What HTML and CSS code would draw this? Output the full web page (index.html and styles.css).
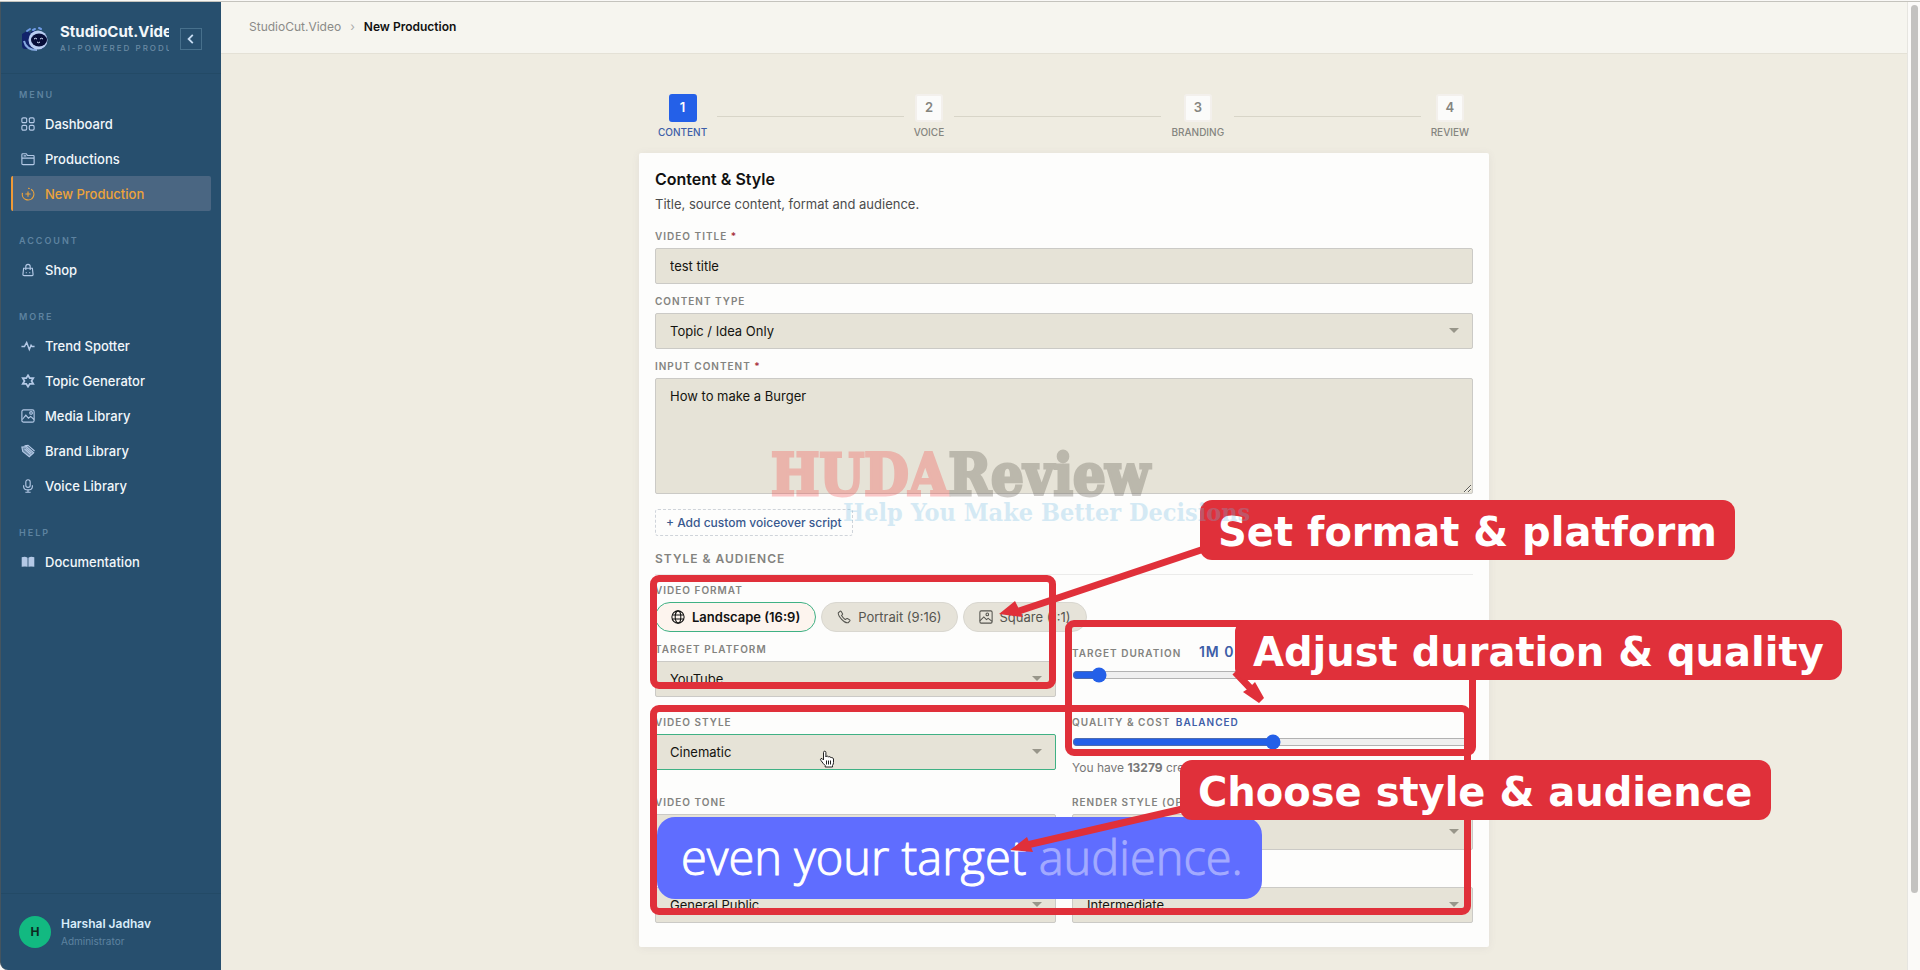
FILE: index.html
```
<!DOCTYPE html>
<html lang="en">
<head>
    <meta charset="UTF-8">
    <meta name="viewport" content="width=device-width, initial-scale=1.0">
    <title>New Production - StudioCut.Video</title>
    <link rel="stylesheet" href="styles.css">
</head>
<body>
    <div class="app">
        <!-- sidebar -->
        <aside class="sidebar">
            <div class="brand">
                <svg class="brand-logo" viewBox="0 0 28 26">
                    <path d="M1 8l5-3 3 2 3-3 10 3v16H4q-3 0-3-4z" fill="#12246b"/>
                    <path d="M6 5l3-2M12 4l2-1M18 2l2 1" stroke="#6f9be6" stroke-width="2" stroke-linecap="round"/>
                    <path d="M3 15q2 9 13 9" stroke="#86a9e0" stroke-width="2" fill="none"/>
                    <circle cx="17" cy="14" r="9.500" fill="#b9cdf2"/>
                    <ellipse cx="18" cy="14" rx="8" ry="6.500" fill="#070d38"/>
                    <path d="M13 13q1.500-1.500 3 0M19 13q1.500-1.500 3 0M16 16q1.500 1.500 3 0" stroke="#dbe8ff" fill="none"/>
                </svg>
                <div class="brand-text">
                    <div class="brand-name">StudioCut.Video</div>
                    <div class="brand-sub">AI-POWERED PRODUCTION</div>
                </div>
                <button class="collapse" type="button" aria-label="Collapse sidebar">
                    <svg viewBox="0 0 10 10"><path d="M6.500 1.500L3 5l3.500 3.500" fill="none" stroke="currentColor" stroke-width="1.500"/></svg>
                </button>
            </div>

            <nav class="nav">
                <div class="nav-group">
                    <div class="nav-label">MENU</div>
                    <a class="nav-item" href="#">
                        <svg viewBox="0 0 16 16"><rect x="1" y="1" width="5.500" height="5.500" rx="1.500"/><rect x="9.500" y="1" width="5.500" height="5.500" rx="1.500"/><rect x="1" y="9.500" width="5.500" height="5.500" rx="1.500"/><rect x="9.500" y="9.500" width="5.500" height="5.500" rx="1.500"/></svg>
                        Dashboard
                    </a>
                    <a class="nav-item" href="#">
                        <svg viewBox="0 0 16 16"><path d="M1 13V3q0-1 1-1h4l1.500 2H14q1 0 1 1v8q0 1.500-1.500 1.500h-11Q1 14.500 1 13M1 7h14M3 4.500h3"/></svg>
                        Productions
                    </a>
                    <a class="nav-item active" href="#">
                        <svg viewBox="0 0 16 16"><path d="M11.500 2.600a6.600 6.600 0 1 1-9.800 4M8 5v6M5 8h6M8 1.400q1 0 2 .3"/></svg>
                        New Production
                    </a>
                </div>
                <div class="nav-group">
                    <div class="nav-label">ACCOUNT</div>
                    <a class="nav-item" href="#">
                        <svg viewBox="0 0 16 16"><path d="M3 6h10l.8 7q0 1.500-1.500 1.500H3.700q-1.500 0-1.500-1.500zM5.500 8V4q0-2.500 2.500-2.500T10.500 4v4M5.500 11h1M9.500 11h1"/></svg>
                        Shop
                    </a>
                </div>
                <div class="nav-group">
                    <div class="nav-label">MORE</div>
                    <a class="nav-item" href="#">
                        <svg viewBox="0 0 16 16"><path d="M.5 8.500h3.500L6.500 4l3 8 2-5 1 1.500h3" stroke-width="1.600"/></svg>
                        Trend Spotter
                    </a>
                    <a class="nav-item" href="#">
                        <svg viewBox="0 0 16 16"><path d="M8 1.500l2 3.200h4L12 8l2 3.300h-4L8 14.500l-2-3.200H2L4 8 2 4.700h4z" stroke-width="2"/></svg>
                        Topic Generator
                    </a>
                    <a class="nav-item" href="#">
                        <svg viewBox="0 0 16 16"><rect x="1" y="1" width="14" height="14" rx="2"/><path d="M1.500 12L5.500 7l3 3.500L11 8.500l4 3.500"/><circle cx="11.500" cy="4.500" r="1.500"/></svg>
                        Media Library
                    </a>
                    <a class="nav-item" href="#">
                        <svg viewBox="0 0 16 16"><path d="M1 3.500L6.500 3l8 7-5 4.500L2 8.500z" fill="#b4c9e6" fill-opacity=".5"/><path d="M4 2l4-.5L15.500 8M4 5.500L11 12M6 5l6 5.500"/></svg>
                        Brand Library
                    </a>
                    <a class="nav-item" href="#">
                        <svg viewBox="0 0 16 16"><rect x="5.500" y=".8" width="5" height="8.700" rx="2.500"/><path d="M3 7v1.500q0 4 5 4t5-4V7M8 12.500V15M5 15.200h6"/></svg>
                        Voice Library
                    </a>
                </div>
                <div class="nav-group">
                    <div class="nav-label">HELP</div>
                    <a class="nav-item" href="#">
                        <svg viewBox="0 0 16 16"><path d="M.8 2.500Q5 1.500 7.500 3v10.500Q5 12.500.8 13.500zM8.500 3Q11 1.500 15.200 2.500v11Q11 12.500 8.500 13.500z" fill="#b4c9e6" stroke="none"/></svg>
                        Documentation
                    </a>
                </div>
            </nav>

            <div class="user">
                <div class="avatar">H</div>
                <div>
                    <div class="user-name">Harshal Jadhav</div>
                    <div class="user-role">Administrator</div>
                </div>
            </div>
        </aside>

        <!-- main area -->
        <main class="main">
            <header class="topbar">
                <a href="#">StudioCut.Video</a>
                <span class="sep">›</span>
                <strong>New Production</strong>
            </header>

            <div class="wizard">
                <div class="steps">
                    <div class="step current"><span class="step-num">1</span><span class="step-name">CONTENT</span></div>
                    <div class="step-line"></div>
                    <div class="step"><span class="step-num">2</span><span class="step-name">VOICE</span></div>
                    <div class="step-line wide"></div>
                    <div class="step"><span class="step-num">3</span><span class="step-name">BRANDING</span></div>
                    <div class="step-line"></div>
                    <div class="step"><span class="step-num">4</span><span class="step-name">REVIEW</span></div>
                </div>

                <form class="card">
                    <h2>Content &amp; Style</h2>
                    <p class="intro">Title, source content, format and audience.</p>

                    <div class="field">
                        <label for="title">VIDEO TITLE <span class="req">*</span></label>
                        <input class="control" type="text" id="title" value="test title">
                    </div>
                    <div class="field">
                        <label for="type">CONTENT TYPE</label>
                        <div class="select">
                            <select class="control" id="type"><option>Topic / Idea Only</option></select>
                        </div>
                    </div>
                    <div class="field">
                        <label for="content">INPUT CONTENT <span class="req">*</span></label>
                        <textarea class="control" id="content">How to make a Burger</textarea>
                    </div>

                    <button class="add-script" type="button">+ Add custom voiceover script</button>

                    <h3>STYLE &amp; AUDIENCE</h3>

                    <div class="field">
                        <div class="label">VIDEO FORMAT</div>
                        <div class="pills">
                            <button class="pill selected" type="button">
                                <svg viewBox="0 0 16 16"><circle cx="8" cy="8" r="7"/><ellipse cx="8" cy="8" rx="3.200" ry="7"/><path d="M1.500 5.800h13M1.500 10.200h13"/></svg>
                                Landscape (16:9)
                            </button>
                            <button class="pill" type="button">
                                <svg viewBox="0 0 16 16"><path d="M3.700 1.300L1.500 3.200Q1 6 5.300 10.700T12.800 14.500l2-2.200q.2-.6-.3-1l-2.600-1.600q-.5-.2-1 .2l-1 1Q8 10.500 5.200 6.200l1-1q.4-.5.100-1L4.700 1.500q-.5-.5-1-.2z"/></svg>
                                Portrait (9:16)
                            </button>
                            <button class="pill" type="button">
                                <svg viewBox="0 0 16 16"><rect x="1" y="1" width="14" height="14" rx="1.500"/><path d="M1 12.500L5.500 8l3 3 2-1.500 4.500 3.500"/><circle cx="9.500" cy="5" r="1.500"/></svg>
                                Square (1:1)
                            </button>
                        </div>
                    </div>

                    <div class="grid">
                        <div>
                            <label for="platform">TARGET PLATFORM</label>
                            <div class="select"><select class="control" id="platform"><option>YouTube</option></select></div>
                        </div>
                        <div class="duration">
                            <label for="duration">TARGET DURATION <output>1M 0S</output></label>
                            <input type="range" id="duration" min="0" max="100" value="5">
                        </div>
                        <div>
                            <label for="style">VIDEO STYLE</label>
                            <div class="select"><select class="control focused" id="style"><option>Cinematic</option></select></div>
                        </div>
                        <div>
                            <label for="quality">QUALITY &amp; COST <output>BALANCED</output></label>
                            <input type="range" id="quality" min="0" max="100" value="50">
                            <p class="hint">You have <b>13279</b> credits</p>
                        </div>
                        <div>
                            <label for="tone">VIDEO TONE</label>
                            <div class="select"><select class="control" id="tone"><option>Professional</option></select></div>
                        </div>
                        <div>
                            <label for="render">RENDER STYLE (OPTIONAL)</label>
                            <div class="select"><select class="control" id="render"><option>Auto (best for production)</option></select></div>
                        </div>
                        <div>
                            <label for="audience">TARGET AUDIENCE</label>
                            <div class="select"><select class="control" id="audience"><option>General Public</option></select></div>
                        </div>
                        <div>
                            <label for="level">LEVEL</label>
                            <div class="select"><select class="control" id="level"><option>Intermediate</option></select></div>
                        </div>
                    </div>
                </form>

                <!-- tutorial overlay, laid over the wizard -->
                <div class="overlay">
                    <svg class="hand" viewBox="0 0 16 18">
                        <path d="M4.500 10V2.500q0-1.300 1.200-1.300t1.200 1.300V7q.2-1 1.400-.9T9.500 7.200q.3-.7 1.300-.5t1.200 1.200q.3-.5 1.200-.3T14.500 9v3.500q0 1.500-1 3V17H6.200v-1.500Q4 13.500 2 10.500q-1-1.500 0-2t2.500 1.500z" fill="#fff" stroke="#222"/>
                        <path d="M7.500 10.500v4M9.500 10.500v4M11.500 10.500v4" stroke="#222"/>
                    </svg>
                    <div class="caption">even your target <span>audience.</span></div>
                    <div class="box box-format"></div>
                    <div class="box box-duration"></div>
                    <div class="box box-style"></div>
                    <svg class="arrows" viewBox="0 0 640 320">
                        <path d="M571 47L380 111M596 172l18 19M552 307L388 345" stroke="#e0303a" stroke-width="7"/>
                        <path d="M360 114l16-13 8 16zM616 182l9 16-5 5-16-11 6-4zM371 350l17-13 6 15z" fill="#e0303a"/>
                    </svg>
                    <div class="tag tag-format">Set format &amp; platform</div>
                    <div class="tag tag-duration">Adjust duration &amp; quality</div>
                    <div class="tag tag-style">Choose style &amp; audience</div>
                    <div class="mark">
                        <div class="mark-name"><span>HUDA</span>Review</div>
                        <div class="mark-line">Help You Make Better Decisions</div>
                    </div>
                </div>
            </div>
        </main>
        <div class="scrollbar"><div class="thumb"></div></div>
    </div>
</body>
</html>
```
FILE: styles.css
```
*{
    box-sizing: border-box;
    margin: 0;
    padding: 0;
}
body{
    font-family: Inter, "Liberation Sans", sans-serif;
    font-size: 13px;
    color: #111;
    background-color: #f9f8f6;
    padding-top: 1px;
}
button, input, select, textarea{
    font-family: inherit;
}
.app{
    display: flex;
    min-height: calc(100vh - 1px);
    border-top: 1px solid #c4c3bd;
    overflow: hidden;
}

/* sidebar */
.sidebar{
    width: 221px;
    flex-shrink: 0;
    display: flex;
    flex-direction: column;
    background-color: #274f6e;
    border-left: 1px solid #44545f;
    border-bottom-left-radius: 8px;
    color: #f2f7fb;
}
.brand{
    display: flex;
    align-items: center;
    height: 72px;
    padding: 2px 18px 0 20px;
    border-bottom: 1px solid #234a66;
}
.brand-logo{
    width: 28px;
    height: 26px;
    flex-shrink: 0;
}
.brand-text{
    width: 109px;
    margin: 0 11px;
    flex-shrink: 0;
    overflow: hidden;
    white-space: nowrap;
}
.brand-name{
    font-size: 15px;
    font-weight: 700;
    line-height: 18px;
}
.brand-sub{
    font-size: 8px;
    font-weight: 500;
    line-height: 14px;
    letter-spacing: 2px;
    color: #6b8ba4;
}
.collapse{
    width: 22px;
    height: 22px;
    flex-shrink: 0;
    background: none;
    border: 1px solid #47708c;
    color: #c7dcf2;
}
.collapse svg{
    width: 12px;
    height: 12px;
    display: block;
    margin: auto;
}
.nav{
    flex: 1;
    padding: 13px 10px;
}
.nav-group + .nav-group{
    margin-top: 22px;
}
.nav-label{
    padding: 0 8px;
    margin-bottom: 3px;
    font-size: 9px;
    font-weight: 600;
    line-height: 16px;
    letter-spacing: 2px;
    color: #5e83a0;
}
.nav-item{
    display: flex;
    align-items: center;
    gap: 10px;
    height: 35px;
    padding-left: 8px;
    border-left: 2px solid transparent;
    border-radius: 2px;
    font-size: 13px;
    font-weight: 500;
    color: inherit;
    text-decoration: none;
}
.nav-item svg{
    width: 14px;
    height: 14px;
    fill: none;
    stroke: #b4c9e6;
    stroke-width: 1.3;
}
.nav-item.active{
    background-color: #4a6682;
    border-left-color: #f09a38;
    color: #eda33a;
}
.nav-item.active svg{
    stroke: #eda33a;
}
.user{
    display: flex;
    align-items: center;
    gap: 10px;
    padding: 21px 18px;
    border-top: 1px solid #234a66;
}
.avatar{
    width: 32px;
    height: 32px;
    border-radius: 50%;
    background-color: #12b981;
    color: #0c2b22;
    font-size: 12px;
    font-weight: 700;
    line-height: 32px;
    text-align: center;
}
.user-name{
    font-size: 12px;
    font-weight: 600;
    line-height: 18px;
    color: #d8ecfa;
}
.user-role{
    font-size: 10px;
    line-height: 16px;
    color: #5e83a0;
}

/* main */
.main{
    flex: 1;
    background-color: #efece1;
}
.topbar{
    display: flex;
    align-items: center;
    gap: 9px;
    height: 52px;
    padding: 0 28px 2px;
    background-color: #f6f5ef;
    border-bottom: 1px solid #e4e1d6;
    font-size: 12px;
}
.topbar a{
    color: #8b8b88;
    text-decoration: none;
}
.topbar .sep{
    color: #aaa;
}
.topbar strong{
    font-weight: 600;
}
.scrollbar{
    width: 13px;
    flex-shrink: 0;
    padding: 3px 2px 0 3px;
    background-color: #fbfaf8;
    border-left: 1px solid #e6e5e0;
}
.scrollbar .thumb{
    height: 92%;
    background-color: #c3c2c0;
    border-radius: 4px;
}
.wizard{
    position: relative;
    max-width: 850px;
    margin: 0 auto;
    padding: 40px 0 23px;
}

/* steps */
.steps{
    display: flex;
    padding: 0 20px 0 19px;
    margin-bottom: 13px;
}
.step{
    display: flex;
    flex-direction: column;
    align-items: center;
    color: #85857f;
}
.step-num{
    width: 28px;
    height: 28px;
    background-color: #fbfbfa;
    border: 2px solid #f3f0ec;
    border-radius: 3px;
    font-size: 13px;
    font-weight: 600;
    line-height: 22px;
    text-align: center;
}
.step-name{
    margin-top: 2px;
    font-size: 10px;
    font-weight: 500;
    line-height: 16px;
}
.step.current .step-num{
    background-color: #2460e8;
    border-color: #2460e8;
    color: #fff;
}
.step.current .step-name{
    color: #3d5ea8;
}
.step-line{
    flex: 9;
    height: 1px;
    margin: 22px 10px 0;
    background-color: #d8d5c8;
}
.step-line.wide{
    flex: 10;
}

/* form card */
.card{
    padding: 16px 16px 24px;
    background-color: #fdfdfc;
    border-radius: 2px;
    box-shadow: 0 1px 8px rgba(90, 80, 110, .08);
}
h2{
    font-size: 16px;
    font-weight: 600;
    line-height: 20px;
}
.intro{
    margin: 5px 0 14px;
    line-height: 20px;
    color: #4c4c4c;
}
.field{
    margin-bottom: 9px;
}
label, .label{
    display: block;
    margin-bottom: 4px;
    font-size: 10px;
    font-weight: 600;
    line-height: 16px;
    letter-spacing: 1px;
    color: #83837f;
}
.req{
    color: #a8323e;
}
.control{
    display: block;
    width: 100%;
    height: 36px;
    padding: 0 14px;
    background-color: #e6e3d7;
    border: 1px solid #cbcac6;
    border-radius: 2px;
    font-size: 13px;
    color: #14140f;
    appearance: none;
    outline: none;
}
.control.focused{
    border-color: #3fb184;
}
textarea.control{
    height: 116px;
    padding: 8px 14px;
    line-height: 18px;
    resize: vertical;
}
.select{
    position: relative;
}
.select::after{
    content: "";
    position: absolute;
    right: 14px;
    top: 15px;
    border: 5px solid transparent;
    border-top-color: #98968a;
    border-bottom: 0;
}
.add-script{
    display: block;
    height: 27px;
    margin: 15px 0;
    padding: 0 10px;
    background-color: transparent;
    border: 1px dashed #cfd4da;
    border-radius: 3px;
    font-size: 12px;
    font-weight: 500;
    color: #38588e;
}
h3{
    margin-bottom: 7px;
    padding-bottom: 7px;
    border-bottom: 1px solid #ebebea;
    font-size: 12px;
    font-weight: 600;
    line-height: 16px;
    letter-spacing: 1px;
    color: #83837f;
}
.pills{
    display: flex;
    gap: 5px;
}
.pill{
    display: flex;
    align-items: center;
    gap: 7px;
    height: 30px;
    padding: 0 15px;
    background-color: #e6e3d9;
    border: 1px solid #d9d7d0;
    border-radius: 15px;
    font-size: 13px;
    color: #55554f;
}
.pill svg{
    width: 14px;
    height: 14px;
    fill: none;
    stroke: currentColor;
    stroke-width: 1.2;
}
.pill.selected{
    background-color: #fdf4ee;
    border-color: #3fb184;
    font-weight: 600;
    color: #111;
}
.grid{
    display: grid;
    grid-template-columns: 1fr 1fr;
    gap: 17px 16px;
}
input[type=range]{
    display: block;
    width: 100%;
    height: 16px;
    accent-color: #2460e8;
}
output{
    margin-left: 2px;
    color: #3d5ea8;
}
.duration label{
    margin-bottom: 3px;
    line-height: 22px;
}
.duration output{
    margin-left: 14px;
    font-size: 14px;
}
.hint{
    margin-top: 9px;
    font-size: 12px;
    line-height: 18px;
    color: #777;
}

/* tutorial overlay */
.overlay{
    position: absolute;
    inset: 0;
    pointer-events: none;
}
.overlay > *{
    position: absolute;
}
.hand{
    left: 180px;
    top: 696px;
    width: 16px;
    height: 18px;
    fill: none;
}
.caption{
    left: 18px;
    top: 763px;
    width: 605px;
    height: 82px;
    padding-left: 24px;
    background-color: #5f6dff;
    border-radius: 18px;
    font-family: "Open Sans", Inter, sans-serif;
    font-size: 47px;
    font-weight: 300;
    line-height: 80px;
    white-space: nowrap;
    color: #fff;
    -webkit-text-stroke: 1px;
}
.caption span{
    color: #a3aaff;
}
.box{
    border: 7px solid #e0303a;
    border-radius: 9px;
}
.box-format{
    left: 11px;
    top: 521px;
    width: 406px;
    height: 114px;
}
.box-duration{
    left: 426px;
    top: 566px;
    width: 411px;
    height: 136px;
}
.box-style{
    left: 11px;
    top: 651px;
    width: 821px;
    height: 210px;
}
.arrows{
    left: 0;
    top: 446px;
    width: 640px;
    height: 320px;
    overflow: visible;
}
.tag{
    height: 60px;
    padding: 0 18px;
    background-color: #e0303a;
    border-radius: 12px;
    font-family: "DejaVu Sans", sans-serif;
    font-size: 40px;
    font-weight: 700;
    line-height: 64px;
    white-space: nowrap;
    color: #fff;
}
.tag-format{
    left: 561px;
    top: 446px;
}
.tag-duration{
    left: 596px;
    top: 566px;
}
.tag-style{
    left: 541px;
    top: 706px;
}
.mark{
    left: 132px;
    top: 392px;
    font-family: "DejaVu Serif Condensed", "DejaVu Serif", serif;
    font-weight: 700;
    white-space: nowrap;
    opacity: .28;
}
.mark-name{
    font-size: 57px;
    line-height: 58px;
    color: #504b41;
    -webkit-text-stroke: 3px;
}
.mark-name span{
    color: #f53c3c;
}
.mark-line{
    margin-left: 72px;
    font-size: 25px;
    line-height: 18px;
    color: #6eb9e1;
}
```
